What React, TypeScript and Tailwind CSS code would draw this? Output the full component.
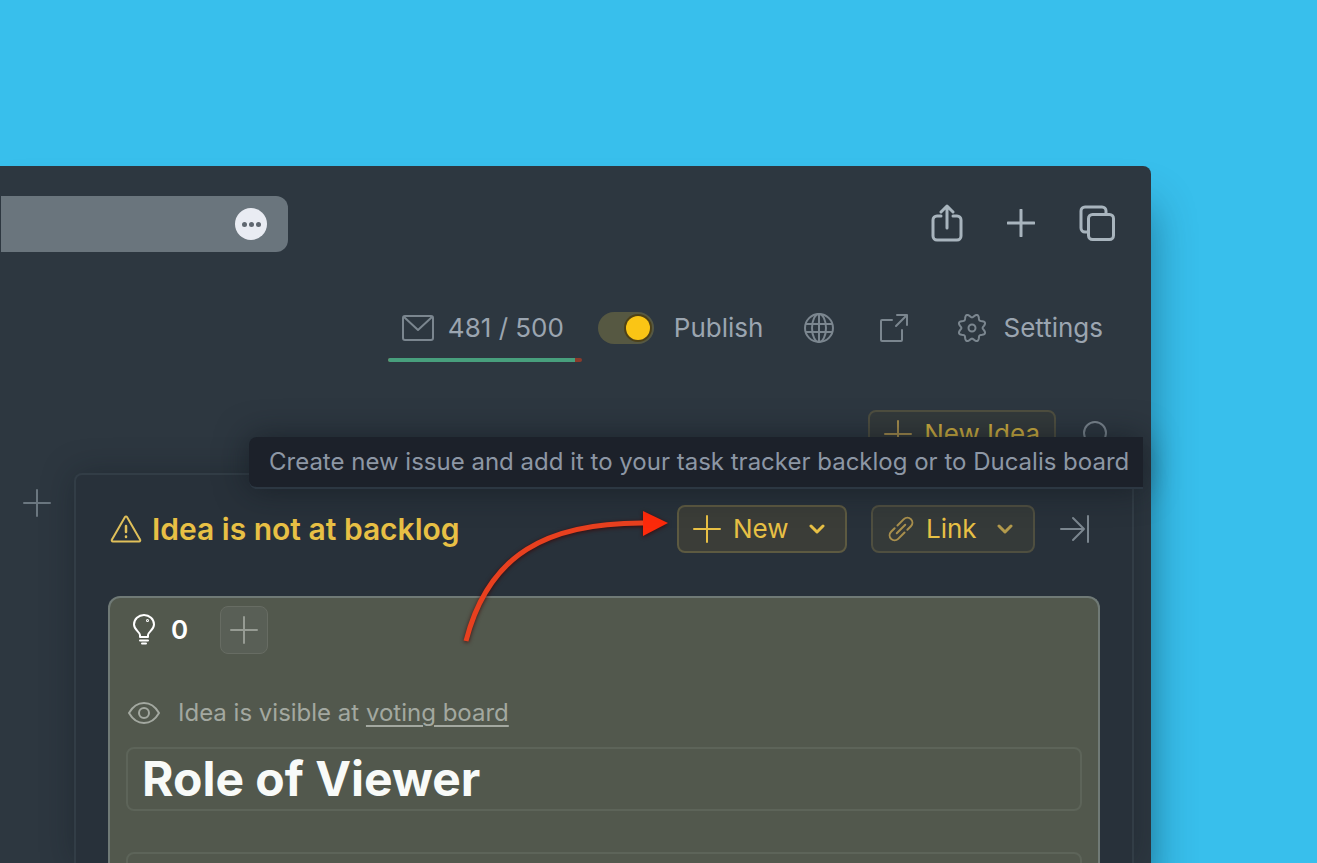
import type { ReactNode } from 'react'

interface IconProps {
  width: number
  height: number
  strokeWidth?: number
  className?: string
  children: ReactNode
}

/** Outline icon drawn at its natural pixel size. */
function Icon({ width, height, strokeWidth = 2, className = '', children }: IconProps) {
  return (
    <svg
      width={width}
      height={height}
      viewBox={`0 0 ${width} ${height}`}
      fill="none"
      stroke="currentColor"
      strokeWidth={strokeWidth}
      strokeLinecap="round"
      strokeLinejoin="round"
      aria-hidden="true"
      className={`shrink-0 ${className}`}
    >
      {children}
    </svg>
  )
}

function PlusIcon({ strokeWidth = 2, className = '' }: { strokeWidth?: number; className?: string }) {
  return (
    <Icon width={28} height={28} strokeWidth={strokeWidth} className={className}>
      <path d="M14 1v26M1 14h26" />
    </Icon>
  )
}

function ChevronIcon({ className = '' }: { className?: string }) {
  return (
    <Icon width={16} height={10} strokeWidth={3} className={className}>
      <path d="M2 2l6 6 6-6" />
    </Icon>
  )
}

// Eight soft teeth around a 30px box, with a notch at twelve o'clock.
const GEAR_OUTLINE = Array.from({ length: 96 }, (_, i) => {
  const angle = (i / 96) * Math.PI * 2
  const radius = 12.3 - 1.7 * Math.cos(angle * 8)
  return `${(15 + radius * Math.sin(angle)).toFixed(2)},${(15 - radius * Math.cos(angle)).toFixed(2)}`
}).join(' ')

function BrowserBar() {
  return (
    <div className="flex items-center justify-between pr-9">
      <div className="ml-px flex h-14 w-[287px] items-center justify-end rounded-r-xl bg-[#6a757d] pr-[21px]">
        <button type="button" aria-label="Page menu" className="flex size-8 items-center justify-center gap-[2px] rounded-full bg-[#e9ecf3]">
          <span className="size-[5px] rounded-full bg-[#5f6770]" />
          <span className="size-[5px] rounded-full bg-[#5f6770]" />
          <span className="size-[5px] rounded-full bg-[#5f6770]" />
        </button>
      </div>
      <div className="mb-[2px] flex items-center gap-11 text-[#a8b4bd]">
        <button type="button" aria-label="Share">
          <Icon width={32} height={38} strokeWidth={3}>
            <path d="M10 12H6a4 4 0 0 0-4 4v16a4 4 0 0 0 4 4h20a4 4 0 0 0 4-4V16a4 4 0 0 0-4-4h-4" />
            <path d="M16 24V2M10 8l6-6 6 6" />
          </Icon>
        </button>
        <button type="button" aria-label="New tab">
          <PlusIcon strokeWidth={3} />
        </button>
        <button type="button" aria-label="Show tabs">
          <Icon width={36} height={36} strokeWidth={3}>
            <path d="M9 27H6a4 4 0 0 1-4-4V6a4 4 0 0 1 4-4h17a4 4 0 0 1 4 4v3" />
            <rect x="9.5" y="9.5" width="25" height="25" rx="4" />
          </Icon>
        </button>
      </div>
    </div>
  )
}

function BoardHeader() {
  return (
    <div className="mt-[52px] flex items-center justify-end pr-12 text-[#9ba5b0]">
      <div className="relative flex h-12 w-[194px] items-center gap-[14px] pl-[14px]">
        <Icon width={32} height={26} className="text-[#7b868f]">
          <rect x="1" y="1" width="30" height="24" rx="2" />
          <path d="M2 2l14 13L30 2" />
        </Icon>
        <span>481 / 500</span>
        <div className="absolute inset-x-0 -bottom-[10px] flex h-1 overflow-hidden rounded-full bg-[#8a3a2b]">
          <div className="w-[96.5%] bg-[#489f7d]" />
        </div>
      </div>
      <label className="ml-4 flex items-center gap-5">
        <input
          type="checkbox"
          role="switch"
          defaultChecked
          className="relative h-8 w-14 appearance-none rounded-full bg-[#565842] before:absolute before:top-1 before:right-1 before:size-6 before:rounded-full before:bg-[#fac515] before:ring-2 before:ring-[#4d4118]"
        />
        Publish
      </label>
      <button type="button" aria-label="Language" className="ml-10 text-[#7b868f]">
        <Icon width={32} height={32}>
          <circle cx="16" cy="16" r="14" />
          <ellipse cx="16" cy="16" rx="7" ry="14" />
          <path d="M16 2v28M3 12h26M3 20h26" />
        </Icon>
      </button>
      <a href="#board" aria-label="Open board" className="ml-11 text-[#7b868f]">
        <Icon width={30} height={30}>
          <path d="M13 7H3a1 1 0 0 0-1 1v19a1 1 0 0 0 1 1h19a1 1 0 0 0 1-1V17" />
          <path d="M17 13L28 2M18 2h10v10" />
        </Icon>
      </a>
      <button type="button" className="ml-12 flex items-center gap-4">
        <Icon width={30} height={30} className="text-[#7b868f]">
          <polygon points={GEAR_OUTLINE} />
          <circle cx="15" cy="15" r="3.5" />
        </Icon>
        Settings
      </button>
    </div>
  )
}

function Arrow() {
  return (
    <svg
      width="216"
      height="146"
      viewBox="0 0 216 146"
      fill="none"
      aria-hidden="true"
      className="pointer-events-none absolute top-0 right-full z-10 mr-[5px] drop-shadow-[0_1px_2px_rgba(60,0,0,0.8)]"
    >
      <path d="M10 136C32 50 90 17 190 18" stroke="#e8401f" strokeWidth="5" />
      <path d="M187 6L212 18L187 31Z" fill="#fd2a0b" />
    </svg>
  )
}

function PanelHeader() {
  return (
    <div className="flex items-center pr-[10px] pl-[2px] text-[#e8c045]">
      <Icon width={32} height={28} className="text-[#e0c05a]">
        <path d="M15 2a1.200 1.200 0 0 1 2 0l13 22.500a1.200 1.200 0 0 1-1 2H3a1.200 1.200 0 0 1-1-2z" />
        <path d="M16 11v6M16 21.500v.5" strokeWidth="2.500" />
      </Icon>
      <h2 className="ml-[10px] text-[30px] leading-10 font-semibold">Idea is not at backlog</h2>
      <div className="relative ml-auto">
        <Arrow />
        <button type="button" className="flex h-12 w-[170px] items-center rounded-lg border-2 border-[#5d5a41] bg-[#3b3d38] pl-[14px]">
          <PlusIcon />
          <span className="ml-3">New</span>
          <ChevronIcon className="mr-5 ml-auto" />
        </button>
      </div>
      <button type="button" className="ml-6 flex h-12 w-[164px] items-center rounded-lg border-2 border-[#4f4f40] bg-[#353a39] pl-[15px]">
        <Icon width={26} height={26} className="text-[#a88f4d]">
          <g transform="translate(13 13) rotate(-45)">
            <path d="M0-5H9a5 5 0 0 1 0 10H4" />
            <path d="M0 5H-9a5 5 0 0 1 0-10H-4" />
            <path d="M-6 0H6" />
          </g>
        </Icon>
        <span className="ml-3">Link</span>
        <ChevronIcon className="mr-5 ml-auto text-[#b39a4c]" />
      </button>
      <button type="button" aria-label="Collapse panel" className="ml-[25px] text-[#7b868f]">
        <Icon width={30} height={28}>
          <path d="M1 14h23M13 3l11 11-11 11M28 1v26" />
        </Icon>
      </button>
    </div>
  )
}

function IdeaCard() {
  return (
    <section className="mt-[43px] flex-1 rounded-t-xl border-2 border-b-0 border-[#707a76] bg-[#52584d] px-4 pt-2">
      <div className="flex items-center text-white">
        <Icon width={24} height={32} className="ml-[6px]">
          <path d="M8 23v-2c0-3-6-5-6-10.500a10 9.500 0 0 1 20 0C22 16 16 18 16 21v2z" />
          <path d="M8 26.500h8M10 29.500h4" />
          <circle cx="15.500" cy="6.500" r=".5" />
        </Icon>
        <span className="ml-[15px] font-semibold">0</span>
        <button type="button" aria-label="Add vote" className="ml-8 flex size-12 items-center justify-center rounded-lg border border-[#676c63] bg-[#595f56] text-[#969b93]">
          <PlusIcon />
        </button>
      </div>
      <p className="mt-[43px] flex items-center text-[24px] text-[#a3a8a0]">
        <Icon width={34} height={24} className="mr-[17px] ml-px">
          <path d="M2 12C6 5 11 2 17 2s11 3 15 10c-4 7-9 10-15 10S6 19 2 12z" />
          <circle cx="17" cy="12" r="5" />
        </Icon>
        <span>
          Idea is visible at{' '}
          <a href="#voting" className="underline decoration-2 underline-offset-4">
            voting board
          </a>
        </span>
      </p>
      <input
        type="text"
        aria-label="Idea title"
        defaultValue="Role of Viewer"
        className="mt-[18px] h-16 w-full rounded-lg border-2 border-[#5d6459] bg-transparent px-[14px] pb-[2px] text-[48px] leading-[58px] font-bold text-[#f8faf8]"
      />
      <textarea aria-label="Idea description" className="mt-[41px] block h-40 w-full resize-none rounded-lg border-2 border-[#5d6459] bg-transparent p-4" />
    </section>
  )
}

export default function App() {
  return (
    <div className="flex h-screen flex-col overflow-hidden bg-[#38bfec] pt-[166px] pr-[166px] font-['Inter',sans-serif] text-[26px] leading-8">
      <main className="flex min-h-0 flex-1 flex-col rounded-tr-lg bg-[#2d3740] pt-[30px] shadow-[0_40px_44px_rgba(0,40,60,0.45)]">
        <BrowserBar />
        <BoardHeader />
        <div className="mt-[58px] flex items-start justify-end gap-[26px] pr-[39px]">
          <button type="button" className="flex h-12 items-center gap-3 rounded-lg border-2 border-[#4f4f40] bg-[#343a3b] px-[14px] text-[#d3b13f]">
            <PlusIcon className="text-[#a88f4d]" />
            New Idea
          </button>
          <button type="button" aria-label="Search" className="mt-[10px] text-[#7b868f]">
            <Icon width={30} height={30}>
              <circle cx="13" cy="13" r="11" />
              <path d="M21 21l7 7" />
            </Icon>
          </button>
        </div>
        <div className="mt-[15px] flex min-h-0 flex-1 pr-[17px]">
          <button type="button" aria-label="Add column" className="mt-4 mr-[23px] ml-[23px] self-start text-[#6b7780]">
            <PlusIcon />
          </button>
          <div className="relative flex min-w-0 flex-1 flex-col rounded-t-lg border-2 border-b-0 border-[#323d46] bg-[#28313a] px-8 pt-[30px] shadow-[0_0_32px_rgba(15,22,28,0.35)]">
            <div
              role="tooltip"
              className="absolute -top-[38px] -right-[11px] z-20 w-[894px] rounded-l-lg border-b-2 border-[#2c3742] bg-[#1c212a] py-[9px] pl-5 text-[24px] whitespace-nowrap text-[#8d97a5] shadow-[0_0_32px_rgba(15,22,28,0.6)]"
            >
              Create new issue and add it to your task tracker backlog or to Ducalis board
            </div>
            <PanelHeader />
            <IdeaCard />
          </div>
        </div>
      </main>
    </div>
  )
}
